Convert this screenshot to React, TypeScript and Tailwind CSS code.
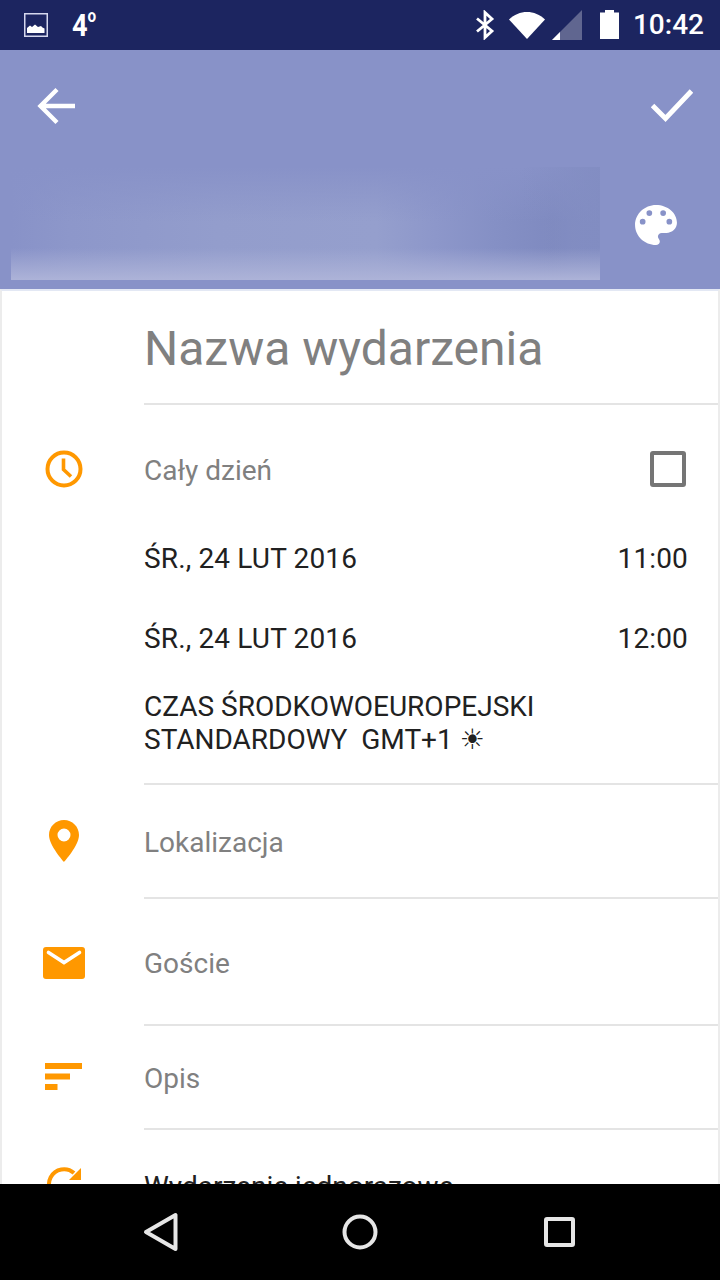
import React from "react";

const orange = "#ff9800";

function StatusBar() {
  return (
    <div className="h-[50px] shrink-0 bg-[#1c2560] flex items-center pl-6 pr-4 text-white">
      <svg width="24" height="24" viewBox="0 0 24 24" className="shrink-0">
        <rect x="0.75" y="0.75" width="22.5" height="22.5" fill="none" stroke="#d5d8ee" strokeWidth="1.5" />
        <path d="M3 20v-5l3-2.5 2 1.5 3-2.5 3 2.5 3-1 1.5 1.5 2 1V20z" fill="#fff" />
      </svg>
      <span className="ml-6 text-[32px] leading-none font-bold font-['Roboto',sans-serif] scale-x-[0.85] origin-left flex items-start">
        4<span className="text-[18px] mt-[-2px]">o</span>
      </span>
      <div className="ml-auto flex items-center">
        <svg width="20" height="30" viewBox="0 0 20 30" fill="none" stroke="#fff" strokeWidth="2.8">
          <path d="M2 8.5 L17 21 L10 27.5 V2.5 L17 9 L2 21.5" />
        </svg>
        <svg width="36" height="28" viewBox="0 0 36 28" className="ml-[14px]">
          <path d="M0 8.5 C10 -1.5 26 -1.5 36 8.5 L18 28z" fill="#fff" />
        </svg>
        <svg width="30" height="30" viewBox="0 0 30 30" className="ml-[7px]">
          <path d="M0 30 L30 0 V30z" fill="#fff" fillOpacity="0.3" />
          <path d="M0 30 L8 22 V30z" fill="#fff" />
        </svg>
        <svg width="19" height="30" viewBox="0 0 19 30" className="ml-[18px]">
          <path d="M5 0h9v2.5h5V29H0V2.5h5z" fill="#fff" />
        </svg>
        <span className="ml-[14px] text-[28px] leading-none font-['Roboto',sans-serif] font-medium">10:42</span>
      </div>
    </div>
  );
}

function Header() {
  return (
    <div className="h-[239px] shrink-0 bg-[#8892c8] flex flex-col">
      <div className="h-[117px] shrink-0 flex items-center justify-between pl-[37px] pr-[27px] pb-[6px]">
        <svg width="38" height="38" viewBox="0 0 38 38" fill="none" stroke="#fff" strokeWidth="4.4">
          <path d="M38 19H4M20 2.5 3.5 19 20 35.5" />
        </svg>
        <svg width="42" height="34" viewBox="0 0 42 34" fill="none" stroke="#fff" strokeWidth="5">
          <path d="M1.5 16.5 14.5 29.5 40.5 2" />
        </svg>
      </div>
      <div className="flex items-start pl-[11px]">
        <div className="relative w-[589px] h-[113px] overflow-hidden bg-[linear-gradient(to_right,#8892c8_0%,#8d97ca_10%,#939dcc_35%,#959fcd_62%,#8d97ca_72%,#8590c5_82%,#7f8ac0_92%,#8590c5_100%)]">
          <div className="absolute inset-x-0 top-0 h-[55px] bg-gradient-to-b from-[#8892c8] to-transparent" />
          <div className="absolute right-0 inset-y-0 w-[80px] bg-gradient-to-r from-transparent to-[#818cc1] opacity-80" />
          <div className="absolute inset-x-0 bottom-0 h-[32px] bg-gradient-to-b from-transparent to-[#adb3d8]" />
        </div>
        <svg width="42" height="40" viewBox="0 0 44 42" className="ml-[35px] mt-[38px]">
          <path
            fill="#fff"
            fillRule="evenodd"
            d="M22 0C10 0 0 9.400 0 21s10 21 22 21c2.200 0 4-1.700 4-3.800 0-1-.4-1.900-1-2.600-.6-.7-1-1.500-1-2.500 0-2.100 1.800-3.800 4-3.800h4.800C39 29.300 44 24.600 44 18.700 44 8.400 34.200 0 22 0zM8 20.500a3 3 0 1 1 0-6 3 3 0 0 1 0 6zm7-9a3 3 0 1 1 0-6 3 3 0 0 1 0 6zm14.500 0a3 3 0 1 1 0-6 3 3 0 0 1 0 6zM36 20.500a3 3 0 1 1 0-6 3 3 0 0 1 0 6z"
          />
        </svg>
      </div>
    </div>
  );
}

function Divider() {
  return <div className="h-[2px] ml-[142px] bg-[#e4e4e4]" />;
}

function IconSlot({ children }: { children: React.ReactNode }) {
  return <div className="w-[142px] shrink-0 pr-[18px] flex justify-center">{children}</div>;
}

function Row({ icon, label, className }: { icon: React.ReactNode; label: string; className: string }) {
  return (
    <div className={`flex items-center text-[#808080] text-[28px] leading-none ${className}`}>
      <IconSlot>{icon}</IconSlot>
      <span className="mt-[4px]">{label}</span>
    </div>
  );
}

function DateRow({ date, time, className }: { date: string; time: string; className: string }) {
  return (
    <div className={`flex items-center justify-between pl-[142px] pr-[30px] pt-[2px] text-[#212121] text-[28px] leading-none tracking-[0.15px] ${className}`}>
      <span>{date}</span>
      <span>{time}</span>
    </div>
  );
}

export default function App() {
  return (
    <div className="w-[720px] h-[1280px] overflow-hidden flex flex-col bg-white font-['Roboto',sans-serif]">
      <StatusBar />
      <Header />
      <div className="flex-1 min-h-0 overflow-hidden border-x-2 border-[#ececec] border-t-2 border-t-[#e3e8f4]">
        <div className="h-[112px] pl-[142px] flex items-center text-[#808080] text-[48px] leading-none pt-[4px]">
          Nazwa wydarzenia
        </div>
        <Divider />
        <div className="h-[130px] flex items-center pr-[32px] text-[#808080] text-[28px] leading-none">
          <IconSlot>
            <svg width="38" height="38" viewBox="0 0 38 38" fill="none" stroke={orange} className="mt-[-2px]">
              <circle cx="19" cy="19" r="16.500" strokeWidth="4" />
              <path d="M18.500 8.500V19.500L26 26.500" strokeWidth="3.600" />
            </svg>
          </IconSlot>
          <span className="mt-[2px]">Cały dzień</span>
          <div className="ml-auto mt-[-2px] w-[36px] h-[36px] border-[4px] border-[#757575] rounded-[3px]" />
        </div>
        <DateRow date="ŚR., 24 LUT 2016" time="11:00" className="h-[46px]" />
        <DateRow date="ŚR., 24 LUT 2016" time="12:00" className="h-[46px] mt-[34px]" />
        <div className="mt-[29px] pl-[142px] text-[#212121] text-[28px] leading-[33px] h-[93px] whitespace-pre">
          <div>CZAS ŚRODKOWOEUROPEJSKI</div>
          <div>
            STANDARDOWY  GMT+1{" "}
            <span className="font-['DejaVu_Sans',sans-serif] text-[28px]">☀</span>
          </div>
        </div>
        <Divider />
        <Row
          className="h-[112px]"
          label="Lokalizacja"
          icon={
            <svg width="30" height="42" viewBox="0 0 30 42" className="mt-[-1px]">
              <path
                fill={orange}
                fillRule="evenodd"
                d="M15 0C6.700 0 0 6.700 0 15c0 10.500 15 27 15 27s15-16.500 15-27C30 6.700 23.300 0 15 0zm0 21.500a6.500 6.500 0 1 1 0-13 6.500 6.500 0 0 1 0 13z"
              />
            </svg>
          }
        />
        <Divider />
        <Row
          className="h-[125px]"
          label="Goście"
          icon={
            <svg width="42" height="32" viewBox="0 0 42 32" className="mt-[3px]">
              <rect width="42" height="32" rx="3" fill={orange} />
              <path d="M5.500 5.500 21 15.500 36.500 5.500" fill="none" stroke="#fff" strokeWidth="3.600" strokeLinecap="round" />
            </svg>
          }
        />
        <Divider />
        <Row
          className="h-[102px]"
          label="Opis"
          icon={
            <svg width="38" height="28" viewBox="0 0 38 28" fill={orange} className="mt-[-1px]">
              <rect width="37" height="6" />
              <rect y="10.500" width="25" height="6" />
              <rect y="21" width="12.500" height="6" />
            </svg>
          }
        />
        <Divider />
        <div className="h-[114px] flex items-center text-[#212121] text-[28px] leading-none">
          <IconSlot>
            <svg width="38" height="38" viewBox="0 0 38 38" fill="none" className="mt-[-6px]">
              <path d="M34 19a15 15 0 1 1-5-11" stroke={orange} strokeWidth="4" />
              <path d="M36 3v12H24z" fill={orange} />
            </svg>
          </IconSlot>
          <span>Wydarzenie jednorazowe</span>
        </div>
      </div>
      <div className="h-[96px] shrink-0 bg-black flex items-center justify-between pl-[143px] pr-[145px]">
        <svg width="36" height="40" viewBox="0 0 36 40" fill="none" stroke="#e6e6e6" strokeWidth="4" strokeLinejoin="round">
          <path d="M32.500 3V37L3 20z" />
        </svg>
        <svg width="36" height="36" viewBox="0 0 36 36" fill="none" stroke="#e6e6e6" strokeWidth="4">
          <circle cx="18" cy="18" r="15.500" />
        </svg>
        <svg width="34" height="34" viewBox="0 0 34 34" fill="none" stroke="#e6e6e6" strokeWidth="4" strokeLinejoin="round">
          <rect x="5" y="4" width="27" height="26" rx="1" />
        </svg>
      </div>
    </div>
  );
}
